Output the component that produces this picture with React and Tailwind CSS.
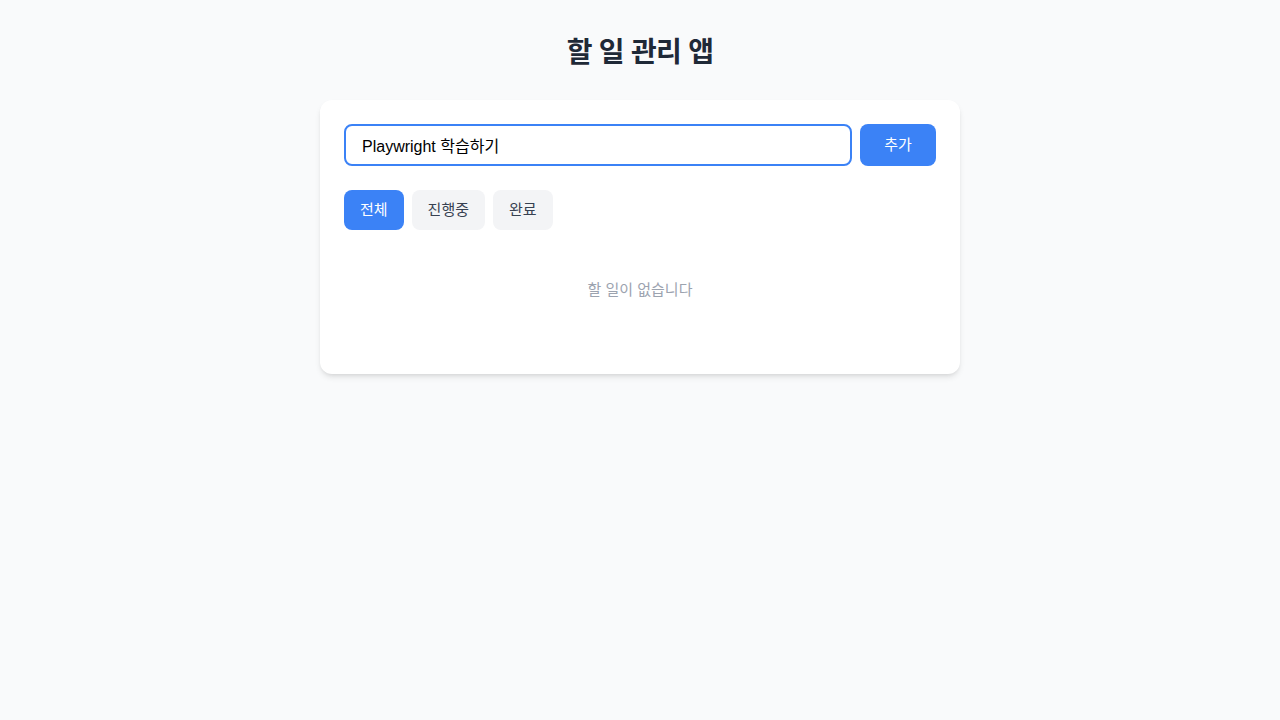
import React, { useState } from "react";

export default function App() {
  const [text, setText] = useState("Playwright 학습하기");
  const [filter, setFilter] = useState("all");
  const filters = [
    { id: "all", label: "전체" },
    { id: "active", label: "진행중" },
    { id: "done", label: "완료" },
  ];
  return (
    <div
      className="min-h-screen bg-[#f9fafb] pt-[35px] pb-8"
      style={{ fontFamily: '"Liberation Sans", "Noto Sans CJK KR", sans-serif' }}
    >
      <div className="max-w-[640px] mx-auto">
        <h1 className="text-center text-[28px] leading-9 font-bold tracking-tight text-[#1f2937] mb-[29px]">
          할 일 관리 앱
        </h1>
        <div className="bg-white rounded-xl shadow-md p-6">
          <div className="flex gap-2 mb-6">
            <input
              value={text}
              onChange={(e) => setText(e.target.value)}
              className="flex-1 min-w-0 h-[42px] px-4 border-2 border-[#3b82f6] rounded-lg text-base text-black outline-none"
            />
            <button className="w-[76px] h-[42px] bg-[#3b82f6] text-white text-[15px] rounded-lg">
              추가
            </button>
          </div>
          <div className="flex gap-2 mb-6">
            {filters.map((f) =>
              f.id === filter ? (
                <button
                  key={f.id}
                  onClick={() => setFilter(f.id)}
                  className="h-10 px-4 rounded-lg text-[15px] bg-[#3b82f6] text-white"
                >
                  {f.label}
                </button>
              ) : (
                <button
                  key={f.id}
                  onClick={() => setFilter(f.id)}
                  className="h-10 px-4 rounded-lg text-[15px] bg-[#f3f4f6] text-[#374151]"
                >
                  {f.label}
                </button>
              )
            )}
          </div>
          <div className="pt-6 pb-12 text-center text-[15px] leading-6 text-[#9ca3af]">
            할 일이 없습니다
          </div>
        </div>
      </div>
    </div>
  );
}
